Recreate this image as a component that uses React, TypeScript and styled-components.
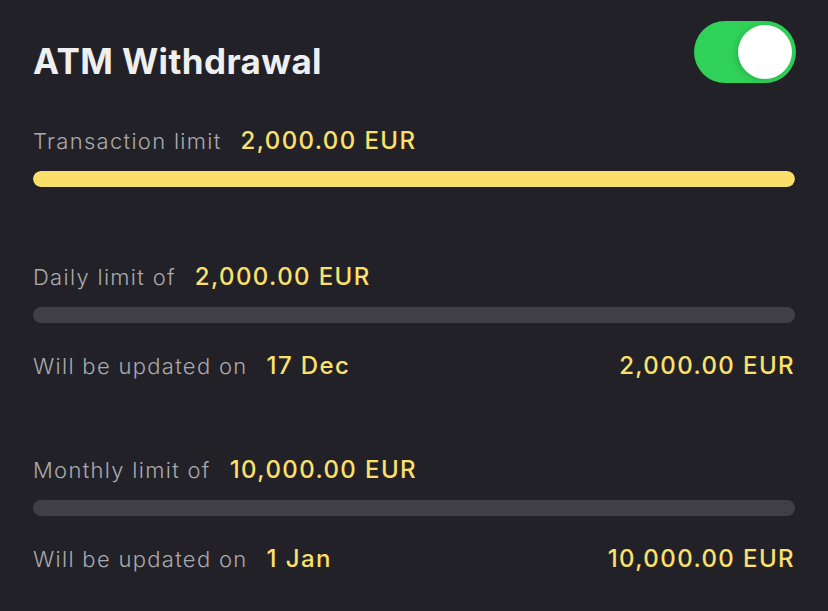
import React from 'react';
import styled, { createGlobalStyle } from 'styled-components';

const GlobalStyle = createGlobalStyle`
  html, body {
    margin: 0;
    padding: 0;
    background: #222127;
  }
  body {
    font-family: Inter, "Noto Sans", "Liberation Sans", sans-serif;
  }
`;

const Page = styled.div`
  width: 828px;
  height: 611px;
  box-sizing: border-box;
  padding: 21px 33px 0 33px;
  background: #222127;
  display: flex;
  flex-direction: column;
`;

const Header = styled.div`
  display: flex;
  justify-content: space-between;
  align-items: flex-start;
  height: 62px;
`;

const Title = styled.h1`
  margin: 20px 0 0;
  font-size: 35px;
  line-height: 40px;
  font-weight: 700;
  letter-spacing: 0.4px;
  color: #efeff0;
`;

const Toggle = styled.div<{ on?: boolean }>`
  width: 102px;
  height: 62px;
  margin-right: -1px;
  border-radius: 31px;
  background: ${p => (p.on ? '#30d158' : '#3f3e44')};
  display: flex;
  align-items: center;
  justify-content: ${p => (p.on ? 'flex-end' : 'flex-start')};
  padding: 0 4px;
  box-sizing: border-box;
`;

const Knob = styled.div`
  width: 54px;
  height: 54px;
  border-radius: 50%;
  background: #ffffff;
  box-shadow: -2px 1px 6px rgba(0, 0, 0, 0.15);
`;

const Section = styled.div<{ gap: number }>`
  margin-top: ${p => p.gap}px;
  display: flex;
  flex-direction: column;
`;

const Row = styled.div`
  display: flex;
  align-items: baseline;
  justify-content: space-between;
  height: 24px;
  line-height: 24px;
`;

const Pair = styled.div`
  display: flex;
  align-items: baseline;
  gap: 19px;
`;

const Label = styled.span`
  font-size: 22px;
  font-weight: 300;
  letter-spacing: 1.3px;
  color: #aaa9ae;
`;

const Value = styled.span`
  font-size: 24px;
  font-weight: 500;
  letter-spacing: 1.4px;
  color: #fbe06c;
`;

const Track = styled.div`
  margin-top: 18px;
  height: 16px;
  border-radius: 8px;
  background: #403f45;
  overflow: hidden;
`;

const Fill = styled.div`
  height: 100%;
  border-radius: 8px;
  background: #fbdf6b;
`;

const Update = styled(Row)`
  margin-top: 31px;
`;

export default function App() {
  return (
    <Page>
      <GlobalStyle />
      <Header>
        <Title>ATM Withdrawal</Title>
        <Toggle on>
          <Knob />
        </Toggle>
      </Header>

      <Section gap={46}>
        <Row>
          <Pair>
            <Label>Transaction limit</Label>
            <Value>2,000.00 EUR</Value>
          </Pair>
        </Row>
        <Track>
          <Fill style={{ width: '100%' }} />
        </Track>
      </Section>

      <Section gap={78}>
        <Row>
          <Pair>
            <Label>Daily limit of</Label>
            <Value>2,000.00 EUR</Value>
          </Pair>
        </Row>
        <Track>
          <Fill style={{ width: '0%' }} />
        </Track>
        <Update>
          <Pair>
            <Label>Will be updated on</Label>
            <Value>17 Dec</Value>
          </Pair>
          <Value>2,000.00 EUR</Value>
        </Update>
      </Section>

      <Section gap={80}>
        <Row>
          <Pair>
            <Label>Monthly limit of</Label>
            <Value>10,000.00 EUR</Value>
          </Pair>
        </Row>
        <Track>
          <Fill style={{ width: '0%' }} />
        </Track>
        <Update>
          <Pair>
            <Label>Will be updated on</Label>
            <Value>1 Jan</Value>
          </Pair>
          <Value>10,000.00 EUR</Value>
        </Update>
      </Section>
    </Page>
  );
}
